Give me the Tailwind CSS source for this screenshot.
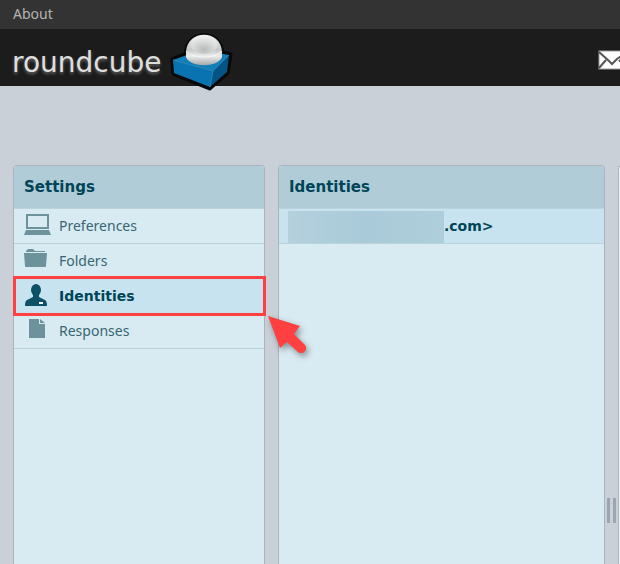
<!DOCTYPE html>
<html lang="en">

<head>
  <meta charset="UTF-8">
  <meta name="viewport" content="width=device-width, initial-scale=1.0">
  <title>Roundcube Webmail :: Identities</title>
  <script src="https://cdn.jsdelivr.net/npm/@tailwindcss/browser@4"></script>
</head>

<body class="flex flex-col min-h-screen overflow-x-hidden bg-[#c9d0d8] font-['Noto_Sans',sans-serif] text-sm text-[#376572]">

  <!-- top line -->
  <nav class="h-[29px] px-[13px] bg-[#333333] leading-7">
    <a href="#" class="text-[#b3b3b3]">About</a>
  </nav>

  <!-- header -->
  <header class="flex justify-between h-[57px] pl-3 bg-[#1c1c1c]">
    <a href="#" class="flex items-start gap-1">
      <span class="pt-[18px] w-[154px] font-['DejaVu_Sans',sans-serif] text-[28px] leading-8 text-[#dedede] [text-shadow:0_2px_3px_#666]">roundcube</span>
      <svg class="mt-1 shrink-0" width="64" height="60" viewBox="0 0 64 60" aria-hidden="true">
        <defs>
          <linearGradient id="ball" x1="0" y1="0" x2="0" y2="1">
            <stop offset="0" stop-color="#f2f2f2" />
            <stop offset=".5" stop-color="#c6c8c8" />
            <stop offset=".7" stop-color="#ececec" />
            <stop offset="1" stop-color="#a5a8aa" />
          </linearGradient>
          <radialGradient id="dish" cx=".5" cy=".75" r=".75">
            <stop offset="0" stop-color="#b9bbbb" />
            <stop offset="1" stop-color="#f0f0f0" />
          </radialGradient>
        </defs>
        <path d="M2 26 L32 14 L61 21 L58 40 L40 56 L3 41 Z" fill="#080808" stroke="#080808" stroke-width="3" stroke-linejoin="round" />
        <circle cx="34" cy="20" r="20" fill="#080808" />
        <path d="M3 27 L31 17 L59 22 L43 38 Z" fill="#127fb9" />
        <path d="M3 27 L43 38 L40 54 L4 40 Z" fill="#0873b0" />
        <path d="M43 38 L59 22 L57 39 L40 54 Z" fill="#035487" />
        <path d="M3 27 L43 38 L59 22 M43 38 L40 54" fill="none" stroke="#3b9bc9" stroke-opacity=".7" />
        <path d="M16 19 C17 -4 51 -4 52 19 L52 24 C48 35 20 35 16 24 Z" fill="url(#ball)" />
        <ellipse cx="34" cy="12" rx="13" ry="9" fill="url(#dish)" />
        <path d="M16 18 C23 26 45 26 52 18" fill="none" stroke="#f6f6f6" stroke-width="1" />
      </svg>
    </a>
    <button type="button" aria-label="Mail" class="w-[22px] overflow-hidden">
      <svg class="mt-1" width="30" height="20" viewBox="0 0 30 20">
        <rect x="1" y="1" width="28" height="18" fill="#fff" stroke="#999" />
        <path d="M1 2 L11 11 L14 14 L19 9 L29 2 M1 18 L8 10 M29 18 L21 10" fill="none" stroke="#555" stroke-width="2" />
      </svg>
    </button>
  </header>

  <main class="flex grow pt-[79px] pl-[13px] overflow-hidden">

    <!-- settings sections -->
    <section class="relative w-[252px] shrink-0 rounded-t border border-b-0 border-[#a9b4bd] bg-[#d9ebf2]">
      <h2 class="h-[43px] px-[10px] rounded-t border-b border-[#bbd3da] bg-[#b0ccd7] font-['DejaVu_Sans',sans-serif] text-[15px] leading-[43px] font-bold text-[#004458]">Settings</h2>
      <ul>
        <li class="border-b border-[#bbd3da]">
          <a href="#" class="flex items-center gap-2 h-[34px] px-[9px]">
            <svg class="mb-[2px]" width="28" height="24" viewBox="0 0 28 24" fill="#6c929c" aria-hidden="true">
              <path fill-rule="evenodd" d="M3 1 H26 V16 H3 Z M5 3 V14 H24 V3 Z" />
              <path d="M3 17 H26 L28 22 H1 Z" />
            </svg>
            Preferences
          </a>
        </li>
        <li class="border-b border-[#bbd3da]">
          <a href="#" class="flex items-center gap-2 h-[34px] px-[9px]">
            <svg class="mb-[2px]" width="28" height="24" viewBox="0 0 28 24" fill="#6c929c" aria-hidden="true">
              <path d="M3 4 V3 L5 1 H10 L12 3 H22 V4 Z" />
              <path d="M1 5 H24 L23 18 Q23 19 22 19 H3 Q2 19 2 18 Z" />
            </svg>
            Folders
          </a>
        </li>
        <li class="border-b border-[#bbd3da] bg-[#c7e3ef]">
          <a href="#" class="relative flex items-center gap-2 h-[34px] px-[9px] font-['DejaVu_Sans',sans-serif] font-bold text-[#004458]">
            <svg class="mb-[2px]" width="28" height="24" viewBox="0 0 28 24" fill="#0d5166" aria-hidden="true">
              <ellipse cx="13" cy="7" rx="5" ry="6" />
              <path d="M10 11 H16 V14 L22 17 Q24 18 24 23 H2 Q2 18 4 17 L10 14 Z" />
              <rect x="16" y="19" width="4" height="2" fill="#fff" />
            </svg>
            Identities
            <span class="absolute -left-px -right-[2px] -top-[3px] -bottom-[3px] border-3 border-[#ff4040]"></span>
          </a>
        </li>
        <li class="border-b border-[#bbd3da]">
          <a href="#" class="flex items-center gap-2 h-[34px] px-[9px]">
            <svg class="mb-[2px]" width="28" height="24" viewBox="0 0 28 24" fill="#6c929c" aria-hidden="true">
              <path d="M6 1 H16 V6 H22 V20 H6 Z" />
              <path d="M17 1 L22 5 H17 Z" />
            </svg>
            Responses
          </a>
        </li>
      </ul>
      <!-- pointer to the selected section -->
      <svg class="absolute left-[252px] top-[148px] z-10 drop-shadow-[2px_3px_3px_#0006]" width="44" height="44" viewBox="0 0 44 44" aria-hidden="true">
        <path d="M2 2 L34 12 L28 20 L39 31 A5 5 0 0 1 32 38 L21 28 L14 34 Z" fill="#ff4040" />
      </svg>
    </section>

    <!-- identities list -->
    <section class="w-[327px] ml-[13px] shrink-0 rounded-t border border-b-0 border-[#a9b4bd] bg-[#d9ebf2]">
      <h2 class="h-[43px] px-[10px] rounded-t border-b border-[#bbd3da] bg-[#b0ccd7] font-['DejaVu_Sans',sans-serif] text-[15px] leading-[43px] font-bold text-[#004458]">Identities</h2>
      <table class="w-full">
        <tbody>
          <tr class="border-b border-[#bbd3da] bg-[#c7e3ef]">
            <td class="pt-[2px] pl-[9px] font-['DejaVu_Sans',sans-serif] font-bold text-[#004458]">
              <div class="flex">
                <span class="w-[156px] h-8 bg-linear-to-r from-[#b4d1dd] via-[#a9cad8] to-[#afcedb]"></span>
                <span class="leading-[30px]">.com&gt;</span>
              </div>
            </td>
          </tr>
        </tbody>
      </table>
    </section>

    <!-- splitter handle -->
    <div class="flex justify-center gap-[3px] w-[13px] shrink-0 pt-[333px]">
      <span class="w-[3px] h-[25px] bg-[#9ba5ae]"></span>
      <span class="w-[3px] h-[25px] bg-[#9ba5ae]"></span>
    </div>

    <section class="grow min-w-40 rounded-tl border-l border-t border-[#a9b4bd] bg-[#f0f3f5]"></section>
  </main>

</body>

</html>
